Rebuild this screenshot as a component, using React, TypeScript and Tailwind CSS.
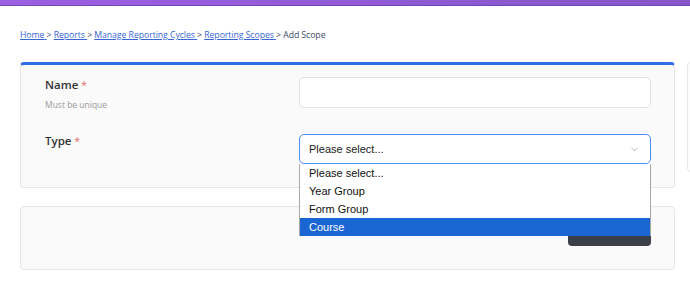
import { ChevronDown } from 'lucide-react';

export default function App() {
  const crumbs = ['Home', 'Reports', 'Manage Reporting Cycles', 'Reporting Scopes'];
  const options = ['Please select...', 'Year Group', 'Form Group', 'Course'];

  return (
    <div className="w-[690px] h-[305px] overflow-hidden bg-white font-['Open_Sans',sans-serif]">
      {/* Top bar */}
      <div className="h-[6px] bg-gradient-to-r from-[#9b60e3] to-[#8656c8] border-b border-[#7446bd]"></div>

      <div className="pl-[20px]">
        {/* Breadcrumb */}
        <div className="pt-[22px] h-[56px] text-[8.7px] leading-[14px] text-[#3d4a66] tracking-[-0.05px]">
          {crumbs.map((c) => (
            <span key={c}>
              <a className="text-[#3766d6] underline">{c} </a>
              <span>&gt; </span>
            </span>
          ))}
          <span>Add Scope</span>
        </div>

        <div className="flex gap-[12px]">
          {/* Main column */}
          <div className="w-[655px] shrink-0">
            {/* Form card */}
            <div className="bg-[#fafafa] border border-[#e6e6e6] border-t-[3px] border-t-[#2f6ee2] rounded-[4px] pl-[24px] pr-[23px] pt-[12px] pb-[23px]">
              <div className="flex items-start h-[31px]">
                <div className="w-[254px] pt-[1px]">
                  <div className="text-[11.5px] leading-[14px] font-semibold text-[#333]">
                    Name <span className="text-[#e06b6b] font-normal text-[10px]">*</span>
                  </div>
                  <div className="mt-[7px] text-[8.5px] leading-[12px] text-[#999]">Must be unique</div>
                </div>
                <div className="flex-1 h-[31px] bg-white border border-[#e2e2e6] rounded-[5px]"></div>
              </div>

              <div className="flex mt-[26px]">
                <div className="w-[254px]">
                  <div className="text-[11.5px] leading-[14px] font-semibold text-[#333]">
                    Type <span className="text-[#e06b6b] font-normal text-[10px]">*</span>
                  </div>
                </div>
                <div className="flex-1 relative">
                  <div className="h-[30px] bg-white border border-[#4f8ef2] rounded-[5px] flex items-center pl-[9px] pr-[10px] font-['Liberation_Sans',sans-serif] text-[11px] text-[#222]">
                    <span className="flex-1">Please select...</span>
                    <ChevronDown className="w-[11px] h-[11px] text-[#999]" strokeWidth={1.5} />
                  </div>
                  {/* Open dropdown list */}
                  <div className="absolute left-0 right-0 top-[30px] z-10 bg-white border-x border-[#a8a8a8] font-['Liberation_Sans',sans-serif] text-[11px] text-[#111]">
                    {options.map((o) => (
                      <div
                        key={o}
                        className={
                          o === 'Course'
                            ? 'h-[18px] leading-[18px] pl-[9px] bg-[#1a66d2] text-white'
                            : 'h-[18px] leading-[18px] pl-[9px]'
                        }
                      >
                        {o}
                      </div>
                    ))}
                  </div>
                </div>
              </div>
            </div>

            {/* Actions card */}
            <div className="mt-[18px] h-[64px] bg-[#fafafa] border border-[#e6e6e6] rounded-[4px] flex justify-end items-start pt-[12px] pr-[23px]">
              <button className="w-[83px] h-[27px] bg-[#3b3f48] rounded-[4px]"></button>
            </div>
          </div>

          {/* Side card */}
          <div className="w-[200px] h-[110px] shrink-0 bg-[#fcfcfc] border border-[#e6e6e6] rounded-[4px]"></div>
        </div>
      </div>
    </div>
  );
}
